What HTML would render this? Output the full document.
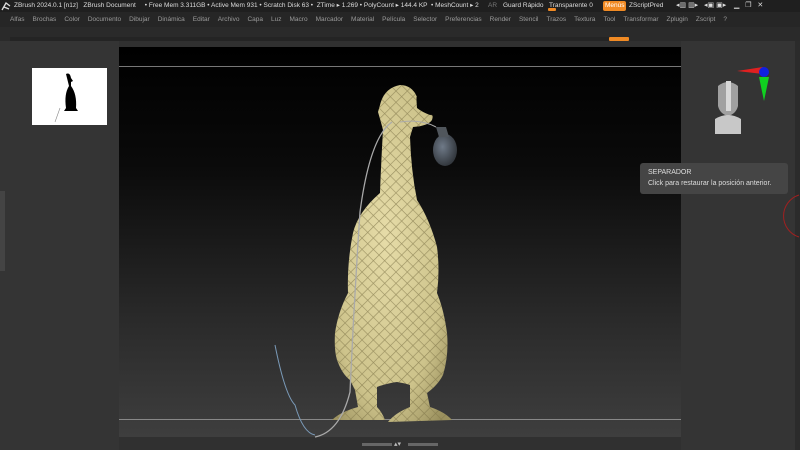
<!DOCTYPE html>
<html><head><meta charset="utf-8"><style>
*{margin:0;padding:0;box-sizing:border-box}
body{width:800px;height:450px;overflow:hidden;background:#303030;font-family:"Liberation Sans",sans-serif;position:relative}
.t{position:absolute;white-space:nowrap}
#top{position:absolute;left:0;top:0;width:800px;height:12px;background:#1f1f1f;color:#ddd;font-size:6.5px;line-height:12px}
#menu{position:absolute;left:0;top:12px;width:800px;height:15px;background:#262626;color:#9a9a9a;font-size:6.5px;line-height:15px}
#menu span{margin-left:8px}
#row{position:absolute;left:0;top:27px;width:800px;height:14px;background:#2a2a2a}
#left{position:absolute;left:0;top:41px;width:119px;height:409px;background:#343434}
#right{position:absolute;left:681px;top:41px;width:119px;height:409px;background:#343434}
#vp{position:absolute;left:119px;top:47px;width:562px;height:390px;background:linear-gradient(#000 0%,#0a0a0a 30%,#2a2a2a 70%,#3e3e3e 100%)}
</style></head><body>
<div id="top">
<span class="t" style="left:14px">ZBrush 2024.0.1 [n1z] &nbsp; ZBrush Document &nbsp; &nbsp; • Free Mem 3.311GB • Active Mem 931 • Scratch Disk 63 • &nbsp;ZTime ▸ 1.269 • PolyCount ▸ 144.4 KP &nbsp;• MeshCount ▸ 2</span>
<span class="t" style="left:488px;color:#777">AR</span>
<span class="t" style="left:503px">Guard Rápido</span>
<span class="t" style="left:549px">Transparente 0</span>
<div style="position:absolute;left:548px;top:8px;width:8px;height:3px;background:#f08a24;border-radius:1px"></div>
<div style="position:absolute;left:603px;top:1px;width:23px;height:10px;background:#f08a24;border-radius:2px"></div>
<span class="t" style="left:605px;color:#fff">Menús</span>
<span class="t" style="left:629px">ZScriptPred</span>
<span class="t" style="left:676px;font-size:7px">◂▥ ▥▸ &nbsp; ◂▣ ▣▸ &nbsp;&nbsp; ▁ &nbsp; ❐ &nbsp; ✕</span>
</div>
<svg style="position:absolute;left:1px;top:1px" width="10" height="10"><path d="M1 9 L5 2 L9 5 M3 6 L8 8" stroke="#ddd" stroke-width="1.3" fill="none"/></svg>
<div id="menu"><span style="margin-left:10px">Alfas</span><span>Brochas</span><span>Color</span><span>Documento</span><span>Dibujar</span><span>Dinámica</span><span>Editar</span><span>Archivo</span><span>Capa</span><span>Luz</span><span>Macro</span><span>Marcador</span><span>Material</span><span>Película</span><span>Selector</span><span>Preferencias</span><span>Render</span><span>Stencil</span><span>Trazos</span><span>Textura</span><span>Tool</span><span>Transformar</span><span>Zplugin</span><span>Zscript</span><span>?</span></div>
<div id="row"><div style="position:absolute;left:10px;top:10px;width:600px;height:4px;background:#242424"></div><div style="position:absolute;left:609px;top:10px;width:20px;height:4px;background:#f08a24;border-radius:1px"></div></div>
<div id="left">
<div style="position:absolute;left:32px;top:27px;width:75px;height:57px;background:#fff"></div>
<svg style="position:absolute;left:32px;top:27px" width="75" height="57"><path d="M34 6 q4 -2 5 4 l2 3 -2 1 v4 q6 8 5 22 l2 3 -14 0 2-3 q-2-14 3-22 z" fill="#000"/><path d="M28 40 l-5 14" stroke="#888" stroke-width=".6"/></svg>
<div style="position:absolute;left:0;top:150px;width:5px;height:80px;background:#444"></div>
</div>
<div id="right">
<div style="position:absolute;left:114px;top:0;width:5px;height:409px;background:#2b2b2b"></div>
<svg style="position:absolute;left:20px;top:20px" width="70" height="80">
<path d="M36 10 L62 6 L62 13 Z" fill="#e02020"/><circle cx="63" cy="11" r="5" fill="#1020e0"/><path d="M58 16 L68 16 L63 40 Z" fill="#10d020"/>
<path d="M17 25 q10 -8 20 0 v20 q-2 8 -10 10 q-8 -2 -10 -10 z" fill="#a0a0a0"/><path d="M25 20 h5 v30 h-5z" fill="#d8d8d8"/><path d="M14 58 q13 -8 26 0 v15 h-26z" fill="#c8c8c8"/>
</svg>
<svg style="position:absolute;left:85px;top:150px" width="34" height="50"><path d="M33 4 a22 22 0 0 0 0 42" stroke="#a02020" fill="none" stroke-width="1"/></svg>
</div>
<div id="vp">
<div style="position:absolute;left:0;top:19px;width:562px;height:1px;background:#777"></div>
<div style="position:absolute;left:0;top:372px;width:562px;height:1px;background:#888"></div>
</div>
<svg style="position:absolute;left:0;top:0" width="800" height="450">
<defs>
<pattern id="sc" width="8" height="8" patternUnits="userSpaceOnUse" patternTransform="rotate(45)"><path d="M0 0 H8 M0 0 V8" stroke="#7e7548" stroke-width="1.3" opacity=".7"/></pattern>
<radialGradient id="bg" cx=".45" cy=".45" r=".7"><stop offset="0" stop-color="#e6dca8"/><stop offset=".7" stop-color="#cdc38b"/><stop offset="1" stop-color="#9a905e"/></radialGradient>
<radialGradient id="bulb" cx=".4" cy=".4" r=".6"><stop offset="0" stop-color="#6f7a88"/><stop offset="1" stop-color="#34393f"/></radialGradient>
<path id="duck" d="M400 85 Q384 88 380 105 L378 112 Q381 122 383 130 Q381 165 380 193 Q358 212 353 233 Q347 262 348 293 Q338 312 335 333 Q334 350 337 360 Q342 374 350 380 L355 390 L358 407 Q340 412 332 420 L385 420 Q382 412 377 407 L377 387 Q388 383 397 382 Q404 383 410 385 L410 407 Q395 413 388 422 L452 420 Q445 412 430 407 L427 393 Q438 385 443 375 Q449 355 447 333 Q444 310 437 293 Q440 270 437 247 Q430 220 417 200 Q411 170 410 137 L413 127 Q428 126 432 120 Q434 114 430 115 Q422 112 417 108 Q416 95 417 97 Q412 85 400 85 Z"/>
</defs>
<use href="#duck" fill="url(#bg)"/>
<use href="#duck" fill="url(#sc)"/>
<ellipse cx="445" cy="150" rx="12" ry="16" fill="url(#bulb)"/>
<path d="M436 127 l3 10 h10 l-3 -10z" fill="#50565c"/>
<path d="M436 127 q-15 -8 -36 -5" stroke="#aaa" fill="none" stroke-width="1"/>
<path d="M392 122 q-22 15 -32 90 q-6 90 -10 180 q-10 40 -35 45" stroke="#aaa" fill="none" stroke-width="1.3"/>
<path d="M275 345 q10 50 20 60 q8 28 20 30" stroke="#7a9ab8" fill="none" stroke-width="1"/>
</svg>
<div style="position:absolute;left:640px;top:163px;width:148px;height:31px;background:#454545;border-radius:3px;color:#ddd;font-size:7px">
<div class="t" style="left:8px;top:6px">SEPARADOR</div><div class="t" style="left:8px;top:17px">Click para restaurar la posición anterior.</div></div>
<div style="position:absolute;left:362px;top:443px;width:30px;height:3px;background:#666"></div>
<div style="position:absolute;left:408px;top:443px;width:30px;height:3px;background:#666"></div>
<div class="t" style="left:394px;top:440px;font-size:7px;color:#bbb">▴▾</div>
</body></html>
